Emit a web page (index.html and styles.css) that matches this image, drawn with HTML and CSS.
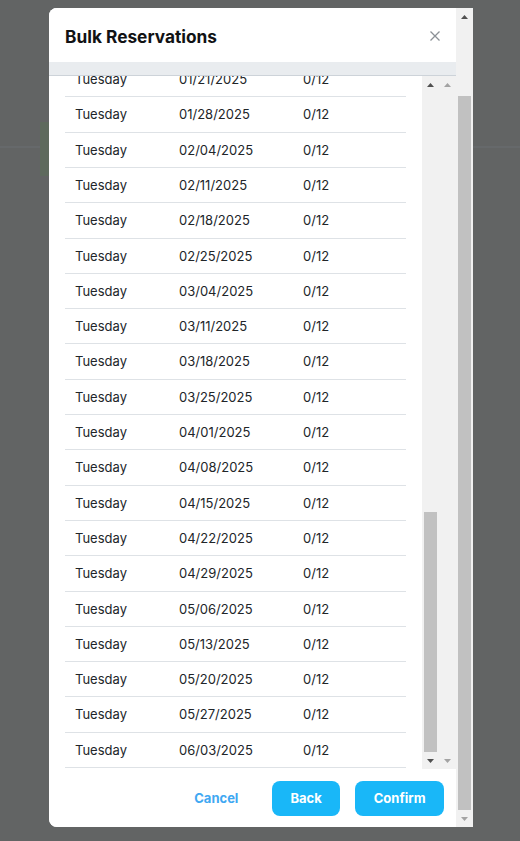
FILE: index.html
```html
<!DOCTYPE html>
<html lang="en">
<head>
<meta charset="utf-8">
<title>Bulk Reservations</title>
<link rel="stylesheet" href="styles.css">
</head>
<body>
<div class="page">
  <div class="page-bar"></div>
  <div class="page-row"><div class="page-btn"></div></div>
</div>
<div class="overlay">
  <div class="modal-frame">
    <div class="modal">
      <div class="modal-inner">
        <div class="modal-header">
          <h2 class="modal-title">Bulk Reservations</h2>
          <button class="close" aria-label="Close">
            <svg width="10" height="10" viewBox="0 0 10 10"><path d="M0.5 0.5L9.5 9.5M9.5 0.5L0.5 9.5" stroke="#8b9096" stroke-width="1.3" fill="none"/></svg>
          </button>
        </div>
        <div class="summary"></div>
        <div class="body-row">
          <div class="table-scroll">
            <div class="table-holder">
              <table class="dates">
                <tbody>
                  <tr><td>Tuesday</td><td>05/28/2024</td><td>0/12</td></tr>
                  <tr><td>Tuesday</td><td>06/04/2024</td><td>0/12</td></tr>
                  <tr><td>Tuesday</td><td>06/11/2024</td><td>0/12</td></tr>
                  <tr><td>Tuesday</td><td>06/18/2024</td><td>0/12</td></tr>
                  <tr><td>Tuesday</td><td>06/25/2024</td><td>0/12</td></tr>
                  <tr><td>Tuesday</td><td>07/02/2024</td><td>0/12</td></tr>
                  <tr><td>Tuesday</td><td>07/09/2024</td><td>0/12</td></tr>
                  <tr><td>Tuesday</td><td>07/16/2024</td><td>0/12</td></tr>
                  <tr><td>Tuesday</td><td>07/23/2024</td><td>0/12</td></tr>
                  <tr><td>Tuesday</td><td>07/30/2024</td><td>0/12</td></tr>
                  <tr><td>Tuesday</td><td>08/06/2024</td><td>0/12</td></tr>
                  <tr><td>Tuesday</td><td>08/13/2024</td><td>0/12</td></tr>
                  <tr><td>Tuesday</td><td>08/20/2024</td><td>0/12</td></tr>
                  <tr><td>Tuesday</td><td>08/27/2024</td><td>0/12</td></tr>
                  <tr><td>Tuesday</td><td>09/03/2024</td><td>0/12</td></tr>
                  <tr><td>Tuesday</td><td>09/10/2024</td><td>0/12</td></tr>
                  <tr><td>Tuesday</td><td>09/17/2024</td><td>0/12</td></tr>
                  <tr><td>Tuesday</td><td>09/24/2024</td><td>0/12</td></tr>
                  <tr><td>Tuesday</td><td>10/01/2024</td><td>0/12</td></tr>
                  <tr><td>Tuesday</td><td>10/08/2024</td><td>0/12</td></tr>
                  <tr><td>Tuesday</td><td>10/15/2024</td><td>0/12</td></tr>
                  <tr><td>Tuesday</td><td>10/22/2024</td><td>0/12</td></tr>
                  <tr><td>Tuesday</td><td>10/29/2024</td><td>0/12</td></tr>
                  <tr><td>Tuesday</td><td>11/05/2024</td><td>0/12</td></tr>
                  <tr><td>Tuesday</td><td>11/12/2024</td><td>0/12</td></tr>
                  <tr><td>Tuesday</td><td>11/19/2024</td><td>0/12</td></tr>
                  <tr><td>Tuesday</td><td>11/26/2024</td><td>0/12</td></tr>
                  <tr><td>Tuesday</td><td>12/03/2024</td><td>0/12</td></tr>
                  <tr><td>Tuesday</td><td>12/10/2024</td><td>0/12</td></tr>
                  <tr><td>Tuesday</td><td>12/17/2024</td><td>0/12</td></tr>
                  <tr><td>Tuesday</td><td>12/24/2024</td><td>0/12</td></tr>
                  <tr><td>Tuesday</td><td>12/31/2024</td><td>0/12</td></tr>
                  <tr><td>Tuesday</td><td>01/07/2025</td><td>0/12</td></tr>
                  <tr><td>Tuesday</td><td>01/14/2025</td><td>0/12</td></tr>
                  <tr><td>Tuesday</td><td>01/21/2025</td><td>0/12</td></tr>
                  <tr><td>Tuesday</td><td>01/28/2025</td><td>0/12</td></tr>
                  <tr><td>Tuesday</td><td>02/04/2025</td><td>0/12</td></tr>
                  <tr><td>Tuesday</td><td>02/11/2025</td><td>0/12</td></tr>
                  <tr><td>Tuesday</td><td>02/18/2025</td><td>0/12</td></tr>
                  <tr><td>Tuesday</td><td>02/25/2025</td><td>0/12</td></tr>
                  <tr><td>Tuesday</td><td>03/04/2025</td><td>0/12</td></tr>
                  <tr><td>Tuesday</td><td>03/11/2025</td><td>0/12</td></tr>
                  <tr><td>Tuesday</td><td>03/18/2025</td><td>0/12</td></tr>
                  <tr><td>Tuesday</td><td>03/25/2025</td><td>0/12</td></tr>
                  <tr><td>Tuesday</td><td>04/01/2025</td><td>0/12</td></tr>
                  <tr><td>Tuesday</td><td>04/08/2025</td><td>0/12</td></tr>
                  <tr><td>Tuesday</td><td>04/15/2025</td><td>0/12</td></tr>
                  <tr><td>Tuesday</td><td>04/22/2025</td><td>0/12</td></tr>
                  <tr><td>Tuesday</td><td>04/29/2025</td><td>0/12</td></tr>
                  <tr><td>Tuesday</td><td>05/06/2025</td><td>0/12</td></tr>
                  <tr><td>Tuesday</td><td>05/13/2025</td><td>0/12</td></tr>
                  <tr><td>Tuesday</td><td>05/20/2025</td><td>0/12</td></tr>
                  <tr><td>Tuesday</td><td>05/27/2025</td><td>0/12</td></tr>
                  <tr><td>Tuesday</td><td>06/03/2025</td><td>0/12</td></tr>
                </tbody>
              </table>
            </div>
          </div>
          <div class="sb">
            <div class="sb-btn"><svg class="arrow on" width="7" height="4" viewBox="0 0 7 4"><path d="M3.5 0L7 4H0Z"/></svg></div>
            <div class="sb-track inner-track"><div class="sb-thumb"></div></div>
            <div class="sb-btn"><svg class="arrow on" width="7" height="4" viewBox="0 0 7 4"><path d="M0 0H7L3.5 4Z"/></svg></div>
          </div>
          <div class="sb">
            <div class="sb-btn"><svg class="arrow off" width="7" height="4" viewBox="0 0 7 4"><path d="M3.5 0L7 4H0Z"/></svg></div>
            <div class="sb-track"></div>
            <div class="sb-btn"><svg class="arrow off" width="7" height="4" viewBox="0 0 7 4"><path d="M0 0H7L3.5 4Z"/></svg></div>
          </div>
        </div>
        <div class="modal-footer">
          <button class="btn btn-link">Cancel</button>
          <button class="btn btn-primary">Back</button>
          <button class="btn btn-primary">Confirm</button>
        </div>
      </div>
    </div>
    <div class="sb">
      <div class="sb-btn"><svg class="arrow on" width="7" height="4" viewBox="0 0 7 4"><path d="M3.5 0L7 4H0Z"/></svg></div>
      <div class="sb-track outer-track"><div class="sb-thumb"></div></div>
      <div class="sb-btn"><svg class="arrow off" width="7" height="4" viewBox="0 0 7 4"><path d="M0 0H7L3.5 4Z"/></svg></div>
    </div>
  </div>
</div>
</body>
</html>
```
FILE: styles.css
```css
html, body {
  margin: 0;
  padding: 0;
}
body {
  width: 520px;
  height: 841px;
  overflow: hidden;
  background: #626464;
  font-family: Inter, "Noto Sans", sans-serif;
}
.page {
  height: 841px;
  display: flex;
  flex-direction: column;
}
.page-bar {
  height: 146px;
  border-bottom: 2px solid #66696b;
}
.page-row {
  padding-left: 40px;
  margin-top: -26px;
}
.page-btn {
  width: 60px;
  height: 54px;
  background: #5e6a5d;
}
.overlay {
  position: fixed;
  inset: 0;
  padding: 8px 0 0 49px;
}
.modal-frame {
  width: 424px;
  height: 819px;
  display: flex;
  background: #fff;
  border-radius: 8px 0 0 8px;
  overflow: hidden;
}
.modal {
  width: 407px;
  height: 100%;
  overflow-y: scroll;
  scrollbar-width: none;
  display: flex;
  flex-direction: column-reverse;
}
.modal-inner {
  flex: none;
  display: flex;
  flex-direction: column;
}
.modal-header {
  position: sticky;
  top: 0;
  z-index: 2;
  height: 54px;
  box-sizing: border-box;
  background: #fff;
  display: flex;
  align-items: center;
  justify-content: space-between;
  padding: 2px 16px 0 16px;
}
.modal-title {
  margin: 0;
  font-size: 17.3px;
  font-weight: 700;
  color: #111214;
}
.close {
  border: 0;
  background: transparent;
  padding: 0;
  width: 10px;
  height: 10px;
  display: flex;
}
.summary {
  height: 95px;
  box-sizing: border-box;
  background: #e9ecef;
  border-bottom: 1px solid #cdd3d9;
}
.body-row {
  height: 693px;
  display: flex;
  padding-left: 16px;
}
.table-scroll {
  flex: 1;
  height: 100%;
  overflow-y: scroll;
  scrollbar-width: none;
  display: flex;
  flex-direction: column-reverse;
}
.table-holder {
  flex: none;
}
.dates {
  width: 341px;
  border-collapse: collapse;
  margin-bottom: 1px;
  font-size: 13px;
  color: #212529;
  table-layout: fixed;
}
.dates td {
  padding: 8px 10px;
  line-height: 18.3px;
  border-bottom: 1px solid #dee2e6;
  white-space: nowrap;
}
.dates td:nth-child(1) { width: 84px; }
.dates td:nth-child(2) { width: 104px; }
.dates td:nth-child(3) { width: 93px; }

.sb {
  flex: none;
  width: 17px;
  height: 100%;
  background: #f1f1f1;
  display: flex;
  flex-direction: column;
}
.sb-btn {
  height: 17px;
  flex: none;
  display: flex;
  align-items: center;
  justify-content: center;
}
.arrow.on { fill: #505050; }
.arrow.off { fill: #a3a3a3; }
.sb-track {
  flex: 1;
  display: flex;
  flex-direction: column;
  padding: 0 2px;
}
.outer-track { padding-top: 71px; }
.inner-track { padding-top: 419px; }
.sb-thumb {
  flex: 1;
  background: #c1c1c1;
}

.modal-footer {
  height: 58px;
  box-sizing: border-box;
  display: flex;
  align-items: center;
  justify-content: flex-end;
  gap: 15px;
  padding: 0 12px;
  background: #fff;
}
.btn {
  height: 35px;
  padding: 0 18.5px;
  border: 0;
  border-radius: 8px;
  font-family: Inter, "Noto Sans", sans-serif;
  font-size: 13px;
  font-weight: 700;
}
.btn-link {
  background: transparent;
  color: #3fa8f2;
}
.btn-primary {
  background: #19b7f8;
  color: #fff;
}
```
